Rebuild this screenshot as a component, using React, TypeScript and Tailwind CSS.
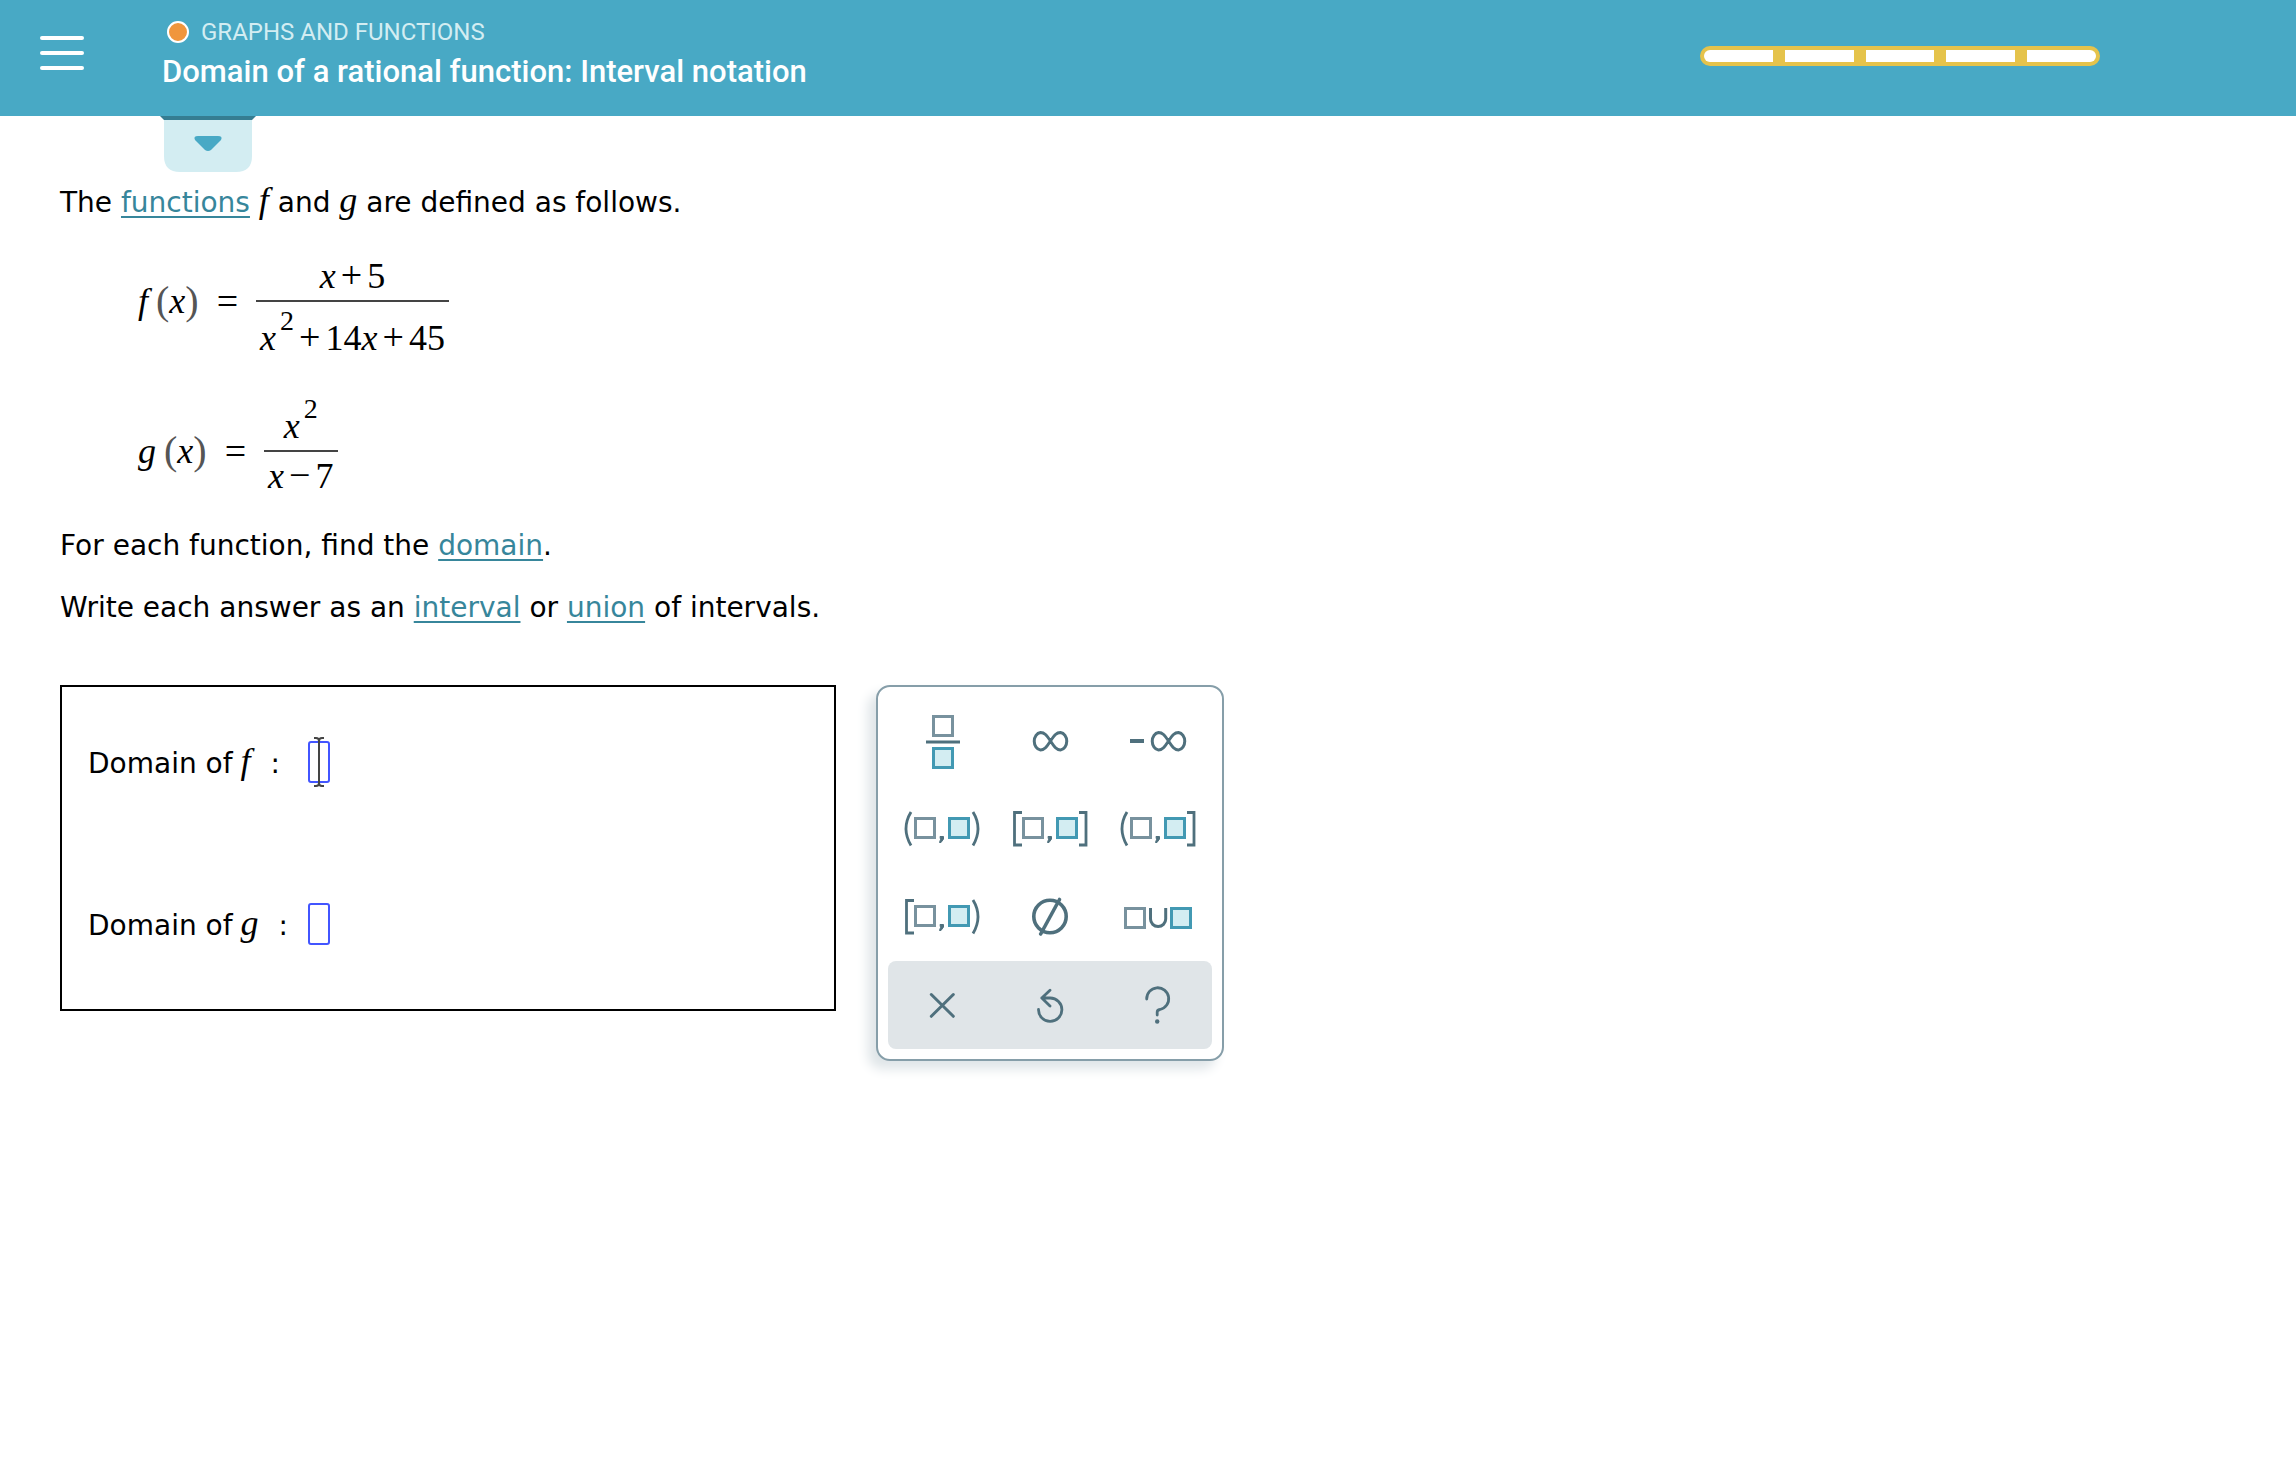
import React, { useState } from 'react';

// --- Inline math helpers ---
const Var: React.FC<{ children: React.ReactNode }> = ({ children }) => (
  <i className="font-['Liberation_Serif',serif] text-[36px] leading-none">{children}</i>
);

const Sup: React.FC<{ children: React.ReactNode }> = ({ children }) => (
  <span className="pl-1 align-[20px] text-[28px] leading-[0]">{children}</span>
);

const Op: React.FC<{ children: React.ReactNode }> = ({ children }) => (
  <span className="px-[5px] text-[38px] leading-[0]">{children}</span>
);

interface EquationProps {
  name: string;
  numerator: React.ReactNode;
  denominator: React.ReactNode;
  tall?: boolean;
}

const Equation: React.FC<EquationProps> = ({ name, numerator, denominator, tall }) => (
  <div className="flex items-center font-['Liberation_Serif',serif] text-[36px] leading-[40px]">
    <div className="flex items-center">
      <i>{name}</i>
      <span className="pl-2 text-[40px] text-[#555]">(</span>
      <i>x</i>
      <span className="text-[40px] text-[#555]">)</span>
    </div>
    <span className="px-[18px] text-[38px]">=</span>
    <div className="flex flex-col text-center">
      <div className="flex h-[56px] items-end justify-center px-1 pb-1">
        <span>{numerator}</span>
      </div>
      <div className="h-[2px] bg-[#444]" />
      <div className={`flex h-[56px] items-start justify-center px-1 ${tall ? 'pt-4' : 'pt-1'}`}>
        <span>{denominator}</span>
      </div>
    </div>
  </div>
);

const Term: React.FC<{ href: string; children: React.ReactNode }> = ({ href, children }) => (
  <a href={href} className="text-[#37869b] underline decoration-2 underline-offset-4">{children}</a>
);

// --- Keypad icons ---
const Box: React.FC<{ x: number; y: number; filled?: boolean }> = ({ x, y, filled }) => (
  <rect
    x={x + 1.5}
    y={y + 1.5}
    width="19"
    height="19"
    fill={filled ? '#d3edf2' : 'none'}
    stroke={filled ? '#4299b3' : '#78929e'}
    strokeWidth="3"
  />
);

const Infinity: React.FC<{ x: number }> = ({ x }) => (
  <path d={`M${x} 44C${x + 4} 38 ${x + 6} 35.5 ${x + 10} 35.5A7 8.8 0 0 1 ${x + 10} 53C${x + 6} 53 ${x + 4} 50 ${x} 44S${x - 6} 35.5 ${x - 10} 35.5A7 8.8 0 0 0 ${x - 10} 53C${x - 6} 53 ${x - 4} 50 ${x} 44Z`} />
);

const Interval: React.FC<{ openLeft: boolean; openRight: boolean }> = ({ openLeft, openRight }) => (
  <>
    <path strokeWidth="2.8" d={openLeft ? 'M23 27Q13 43.5 23 60.5' : 'M26 27.5H18.5V60H26'} />
    <Box x={26} y={32} />
    <path strokeWidth="1" fill="#4f707d" d="M52 51.5h3.5v2.5l-2.5 3.5h-1.5l1-3z" />
    <Box x={60} y={32} filled />
    <path strokeWidth="2.8" d={openRight ? 'M85 27Q95 43.5 85 60.5' : 'M83 27.5H90V60H83'} />
  </>
);

const KEYS: { label: string; icon: React.ReactNode }[] = [
  {
    label: 'Fraction',
    icon: (
      <>
        <Box x={44} y={18} />
        <path d="M38 45H72" />
        <Box x={44} y={50} filled />
      </>
    ),
  },
  { label: 'Infinity', icon: <Infinity x={54.5} /> },
  {
    label: 'Negative infinity',
    icon: (
      <>
        <path strokeWidth="4" d="M26 44H40" />
        <Infinity x={64.5} />
      </>
    ),
  },
  { label: 'Open interval', icon: <Interval openLeft openRight /> },
  { label: 'Closed interval', icon: <Interval openLeft={false} openRight={false} /> },
  { label: 'Left open interval', icon: <Interval openLeft openRight={false} /> },
  { label: 'Right open interval', icon: <Interval openLeft={false} openRight /> },
  {
    label: 'Empty set',
    icon: (
      <>
        <circle cx="54" cy="43.5" r="16.2" strokeWidth="3.6" />
        <path strokeWidth="3.6" strokeLinecap="round" d="M44.7 61L63.5 26.5" />
      </>
    ),
  },
  {
    label: 'Union',
    icon: (
      <>
        <Box x={20} y={34} />
        <path d="M46.5 35V46A7.6 7.6 0 0 0 61.7 46V35" />
        <Box x={66} y={34} filled />
      </>
    ),
  },
];

const ACTIONS: { label: string; icon: React.ReactNode }[] = [
  { label: 'Clear', icon: <path d="M43.3 33.5L65.3 55.3M65.3 33.5L43.3 55.3" /> },
  { label: 'Undo', icon: <path strokeWidth="2.8" d="M54 29.3L45.8 37L54 45M45.8 37H54.2A11.7 11.7 0 1 1 42.5 48.5" /> },
  {
    label: 'Help',
    icon: (
      <>
        <path strokeWidth="2.8" d="M42.7 38A11 11 0 1 1 56 48.5Q53.2 49 53.2 51V54" />
        <circle cx="53.2" cy="60.5" r="2.2" fill="#4f707d" stroke="none" />
      </>
    ),
  },
];

const Key: React.FC<{ label: string; icon: React.ReactNode; round?: boolean }> = ({ label, icon, round }) => (
  <button type="button" aria-label={label} className="cursor-pointer">
    <svg
      viewBox="0 0 108 88"
      className="h-[88px] w-[108px]"
      fill="none"
      stroke="#4f707d"
      strokeWidth="3"
      strokeLinecap={round ? 'round' : 'butt'}
      strokeLinejoin={round ? 'round' : 'miter'}
    >
      {icon}
    </svg>
  </button>
);

const Keypad: React.FC = () => (
  <div className="rounded-[14px] border-2 border-[#869ea9] bg-white p-[10px] shadow-[-8px_8px_12px_#dfe5e8]">
    <div className="grid grid-cols-3">
      {KEYS.map(key => (
        <Key key={key.label} {...key} />
      ))}
    </div>
    <div className="grid grid-cols-3 rounded-lg bg-[#e0e5e8]">
      {ACTIONS.map(key => (
        <Key key={key.label} {...key} round />
      ))}
    </div>
  </div>
);

// --- Answer row ---
interface AnswerProps {
  name: string;
  value: string;
  onChange: (value: string) => void;
  caret?: boolean;
}

const Answer: React.FC<AnswerProps> = ({ name, value, onChange, caret }) => (
  <div className="flex h-[42px] items-center">
    <label htmlFor={`domain-${name}`} className="w-[220px] pt-1 leading-[42px]">
      Domain of
      <span className="pr-5 pl-2">
        <Var>{name}</Var>
      </span>
      :
    </label>
    <div className="relative">
      <input
        id={`domain-${name}`}
        value={value}
        onChange={e => onChange(e.target.value)}
        className="block h-[42px] w-[22px] rounded-[3px] border-2 border-[#4255ff] outline-none"
      />
      {caret && (
        <svg viewBox="0 0 12 52" className="pointer-events-none absolute -top-[5px] left-[5px] h-[52px] w-[12px]" fill="none" stroke="#444" strokeWidth="2">
          <path d="M1 2H3Q6 2 6 5Q6 2 9 2H11M6 4V48M1 50H3Q6 50 6 47Q6 50 9 50H11" />
        </svg>
      )}
    </div>
  </div>
);

const Header: React.FC = () => (
  <header className="flex h-[116px] items-start bg-[#48a9c5] pr-[196px] pl-10 font-[Roboto,sans-serif]">
    <button type="button" aria-label="Menu" className="mt-9 flex w-11 cursor-pointer flex-col gap-[11px]">
      <span className="h-[4px] w-full rounded-full bg-white" />
      <span className="h-[4px] w-full rounded-full bg-white" />
      <span className="h-[4px] w-full rounded-full bg-white" />
    </button>
    <div className="ml-[78px] flex-1 pt-4">
      <div className="flex items-center gap-3 pl-[5px] text-[24px] leading-[32px] text-[#d3edf2]">
        <span className="size-[22px] rounded-full border-2 border-white bg-[#f0963c]" />
        GRAPHS AND FUNCTIONS
      </div>
      <h1 className="mt-1 text-[31px] leading-[40px] font-medium text-white">Domain of a rational function: Interval notation</h1>
    </div>
    <div className="mt-[46px] flex h-5 w-[400px] gap-3 overflow-hidden rounded-full bg-[#e5c34b] p-1">
      <span className="flex-1 rounded-l-full bg-white" />
      <span className="flex-1 bg-white" />
      <span className="flex-1 bg-white" />
      <span className="flex-1 bg-white" />
      <span className="flex-1 rounded-r-full bg-white" />
    </div>
  </header>
);

const App: React.FC = () => {
  const [domainF, setDomainF] = useState('');
  const [domainG, setDomainG] = useState('');

  return (
    <div className="min-h-screen bg-white font-[Verdana,'DejaVu_Sans',sans-serif] text-[28px] text-black">
      <Header />
      <button type="button" aria-label="Show details" className="ml-[160px] block cursor-pointer">
        <svg viewBox="0 0 96 56" className="h-[56px] w-[96px]">
          <path d="M4 0H92V40Q92 56 76 56H20Q4 56 4 40Z" fill="#d3edf2" />
          <path d="M0 0H96L92 4H4Z" fill="#357d92" />
          <path d="M38 20H58Q63 20 61 24L51 34Q48 36 45 34L35 24Q33 20 38 20Z" fill="#48a9c5" />
        </svg>
      </button>

      <main className="pl-[60px]">
        <p className="mt-2.5 leading-[40px]">
          The <Term href="#functions">functions</Term> <Var>f</Var> and <Var>g</Var> are defined as follows.
        </p>

        <div className="mt-[21px] flex flex-col gap-9 pl-[78px]">
          <Equation
            name="f"
            tall
            numerator={<><i>x</i><Op>+</Op>5</>}
            denominator={<><i>x</i><Sup>2</Sup><Op>+</Op>14<i>x</i><Op>+</Op>45</>}
          />
          <Equation
            name="g"
            numerator={<><i>x</i><Sup>2</Sup></>}
            denominator={<><i>x</i><Op>−</Op>7</>}
          />
        </div>

        <p className="mt-[18px] leading-[40px]">
          For each function, find the <Term href="#domain">domain</Term>.
        </p>
        <p className="mt-[22px] leading-[40px]">
          Write each answer as an <Term href="#interval">interval</Term> or <Term href="#union">union</Term> of intervals.
        </p>

        <div className="mt-[57px] flex items-start gap-10">
          <div className="flex h-[326px] w-[776px] flex-col gap-[120px] border-2 border-black px-[26px] pt-[54px]">
            <Answer name="f" value={domainF} onChange={setDomainF} caret />
            <Answer name="g" value={domainG} onChange={setDomainG} />
          </div>
          <Keypad />
        </div>
      </main>
    </div>
  );
};

export default App;
